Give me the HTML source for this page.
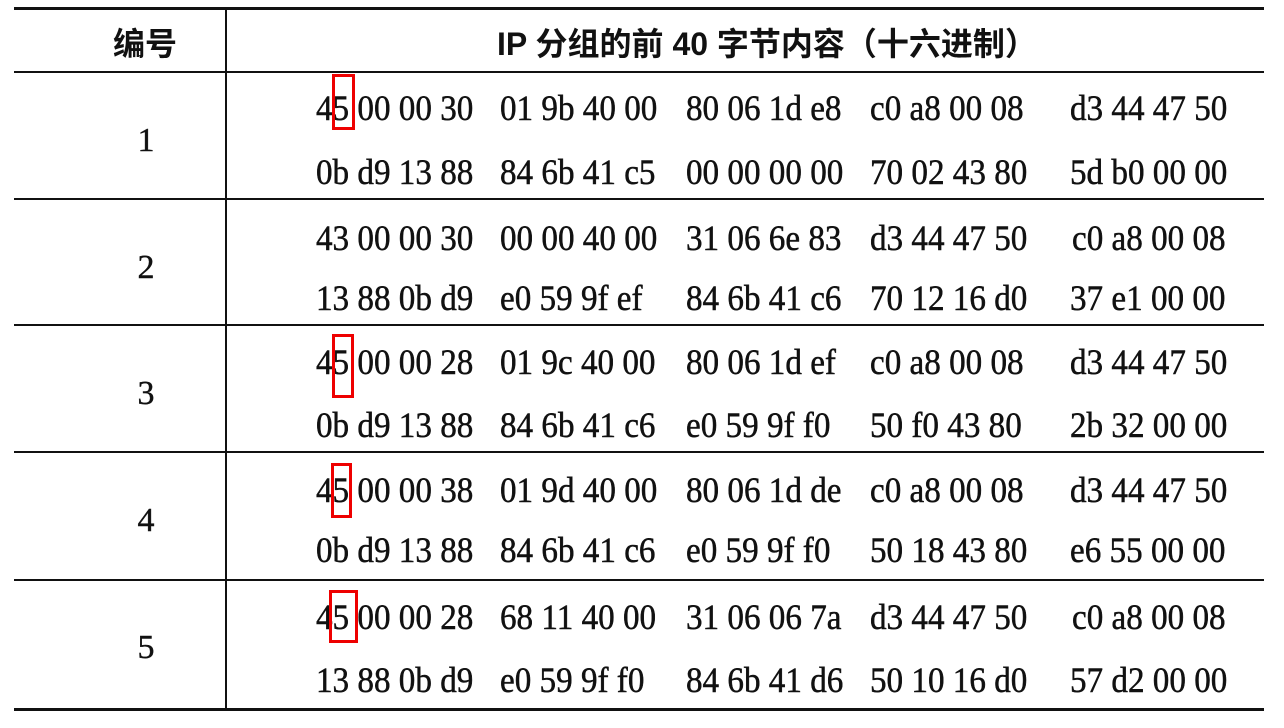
<!DOCTYPE html>
<html><head><meta charset="utf-8"><style>
body{margin:0;width:1284px;height:728px;background:#fff;position:relative;overflow:hidden}
.h{position:absolute;left:14px;width:1250px;background:#111}
.v{position:absolute;left:225px;top:8px;width:2px;height:703px;background:#111}
.t{position:absolute;font-family:"Liberation Serif",serif;font-size:36px;color:#111;white-space:nowrap;transform:scaleX(0.92);transform-origin:left center;line-height:40px;-webkit-text-stroke:0.5px #111}
.hd{position:absolute;top:25px;font-family:"Liberation Sans","Noto Sans CJK SC",sans-serif;font-weight:bold;font-size:32px;color:#111;white-space:nowrap;line-height:38px}
.n{position:absolute;font-family:"Liberation Serif",serif;font-size:34px;color:#111;width:40px;text-align:center;left:126px;line-height:40px;-webkit-text-stroke:0.4px #111}
.r{position:absolute;border:3px solid #e00;box-sizing:border-box}
</style></head><body>
<div class="h" style="top:7px;height:3px"></div>
<div class="h" style="top:71px;height:2px"></div>
<div class="h" style="top:198px;height:2px"></div>
<div class="h" style="top:324px;height:2px"></div>
<div class="h" style="top:451px;height:2px"></div>
<div class="h" style="top:579px;height:2px"></div>
<div class="h" style="top:708px;height:3px"></div>
<div class="v"></div>
<div class="hd" style="left:113px">编号</div>
<div class="hd" style="left:497px">IP 分组的前 40 字节内容（十六进制）</div>
<div class="n" style="top:121px">1</div>
<div class="n" style="top:248px">2</div>
<div class="n" style="top:374px">3</div>
<div class="n" style="top:501px">4</div>
<div class="n" style="top:628px">5</div>
<div id="g"></div>
<script>
var rows=[
["45 00 00 30","01 9b 40 00","80 06 1d e8","c0 a8 00 08","d3 44 47 50"],
["0b d9 13 88","84 6b 41 c5","00 00 00 00","70 02 43 80","5d b0 00 00"],
["43 00 00 30","00 00 40 00","31 06 6e 83","d3 44 47 50","c0 a8 00 08"],
["13 88 0b d9","e0 59 9f ef","84 6b 41 c6","70 12 16 d0","37 e1 00 00"],
["45 00 00 28","01 9c 40 00","80 06 1d ef","c0 a8 00 08","d3 44 47 50"],
["0b d9 13 88","84 6b 41 c6","e0 59 9f f0","50 f0 43 80","2b 32 00 00"],
["45 00 00 38","01 9d 40 00","80 06 1d de","c0 a8 00 08","d3 44 47 50"],
["0b d9 13 88","84 6b 41 c6","e0 59 9f f0","50 18 43 80","e6 55 00 00"],
["45 00 00 28","68 11 40 00","31 06 06 7a","d3 44 47 50","c0 a8 00 08"],
["13 88 0b d9","e0 59 9f f0","84 6b 41 d6","50 10 16 d0","57 d2 00 00"]];
var ys=[110,174,240,300,364,427,492,552,619,682],xs=[316,500,686,870,1070],h="";
rows.forEach(function(r,i){r.forEach(function(c,j){var x=xs[j];if(j==4&&c[0]=='c')x=1072;h+='<div class="t" style="left:'+x+'px;top:'+(ys[i]-22)+'px">'+c+'</div>';});});
document.getElementById('g').innerHTML=h;
</script>
<div class="r" style="left:332px;top:74px;width:23px;height:56px"></div>
<div class="r" style="left:332px;top:334px;width:22px;height:64px"></div>
<div class="r" style="left:331px;top:463px;width:21px;height:55px"></div>
<div class="r" style="left:329px;top:590px;width:29px;height:53px"></div>
</body></html>
